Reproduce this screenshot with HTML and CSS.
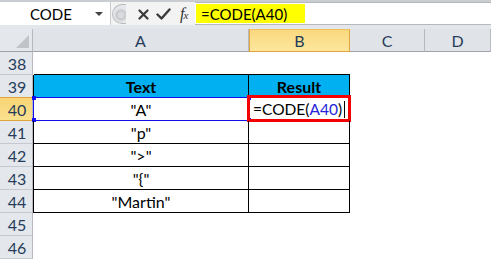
FILE: index.html
```html
<!DOCTYPE html>
<html>
<head>
<meta charset="utf-8">
<link rel="stylesheet" href="styles.css">
</head>
<body>
<div class="toolbar">
  <div class="namebox">
    <span class="name">CODE</span>
    <span class="dd"></span>
  </div>
  <div class="tools">
    <span class="knob"></span>
    <svg class="ico x" width="11" height="11" viewBox="0 0 11 11"><path d="M1.5 1.5 L9.5 9.5 M9.5 1.5 L1.5 9.5" stroke="#3a3a3a" stroke-width="2.2" stroke-linecap="round"/></svg>
    <svg class="ico chk" width="15" height="12" viewBox="0 0 15 12"><path d="M1.5 6.5 L5.5 10.5 L13.5 1.5" stroke="#3a3a3a" stroke-width="2.4" fill="none" stroke-linecap="round" stroke-linejoin="round"/></svg>
    <span class="fx">f<small>x</small></span>
  </div>
  <div class="formula"><span class="hl">=CODE(A40)</span></div>
</div>
<div class="sheet">
  <div class="row head">
    <div class="rh corner"><span class="tri"></span></div>
    <div class="ch">A</div>
    <div class="ch sel">B</div>
    <div class="ch">C</div>
    <div class="ch">D</div>
  </div>
  <div class="row">
    <div class="rh">38</div>
    <div class="c a top"></div><div class="c b top"></div><div class="c"></div><div class="c"></div>
  </div>
  <div class="row">
    <div class="rh">39</div>
    <div class="c a t th">Text</div><div class="c b t th">Result</div><div class="c"></div><div class="c"></div>
  </div>
  <div class="row">
    <div class="rh rsel">40</div>
    <div class="c a t ref">"A"<i class="hd tl"></i><i class="hd bl"></i><i class="hd tr"></i><i class="hd br"></i></div>
    <div class="c b t edit"><span class="etext">=CODE(<span class="blue">A40</span>)</span><span class="caret"></span></div>
    <div class="c"></div><div class="c"></div>
  </div>
  <div class="row">
    <div class="rh">41</div>
    <div class="c a t">"p"</div><div class="c b t"></div><div class="c"></div><div class="c"></div>
  </div>
  <div class="row">
    <div class="rh">42</div>
    <div class="c a t">"&gt;"</div><div class="c b t"></div><div class="c"></div><div class="c"></div>
  </div>
  <div class="row">
    <div class="rh">43</div>
    <div class="c a t">"{"</div><div class="c b t"></div><div class="c"></div><div class="c"></div>
  </div>
  <div class="row">
    <div class="rh">44</div>
    <div class="c a t">"Martin"</div><div class="c b t"></div><div class="c"></div><div class="c"></div>
  </div>
  <div class="row">
    <div class="rh">45</div>
    <div class="c"></div><div class="c"></div><div class="c"></div><div class="c"></div>
  </div>
  <div class="row">
    <div class="rh">46</div>
    <div class="c"></div><div class="c"></div><div class="c"></div><div class="c"></div>
  </div>
</div>
</body>
</html>
```
FILE: styles.css
```css
* { box-sizing: border-box; }
html, body { margin: 0; padding: 0; background: #fff; }
body {
  width: 491px; height: 259px; overflow: hidden;
  font-family: Lato, "Open Sans", sans-serif;
  color: #000;
}
.toolbar {
  height: 29px;
  display: flex;
  background: #e3e6ea;
  border-top: 2px solid #c9ccd1;
  padding-bottom: 4px;
}
.namebox {
  width: 110px;
  background: #fff;
  display: flex;
  align-items: center;
  padding-left: 30px;
  font-size: 15px;
}
.namebox .name { flex: 1; }
.dd {
  width: 0; height: 0;
  border-left: 4px solid transparent;
  border-right: 4px solid transparent;
  border-top: 4px solid #444;
  margin-right: 7px;
}
.tools {
  width: 85px;
  flex: none;
  background: #f3f3f4;
  display: flex;
  align-items: center;
  border-left: 1px solid #c9ccd1;
}
.knob {
  flex: none;
  width: 14px; height: 20px;
  border-radius: 10px 0 0 10px;
  background: radial-gradient(circle at 8px 10px, #d9dadd 0 3px, #c2c4c8 4px, #e6e7ea 7px);
  border: 1px solid #b9bbbf;
  border-right: none;
  margin-left: 1px;
  margin-right: 12px;
}
.ico { display: block; flex: none; }
.ico.x { margin-right: 7px; margin-top: 1px; }
.ico.chk { margin-right: 9px; }
.fx {
  font-family: "Liberation Serif", serif;
  font-style: italic;
  font-size: 16px;
  color: #333;
  letter-spacing: -1px;
}
.fx small { font-size: 11px; }
.formula {
  flex: 1;
  background: #fff;
  border-top: 1px solid #b5b9be;
  border-bottom: 1px solid #b5b9be;
  display: flex;
  align-items: stretch;
  padding: 1px 0 1px 1px;
}
.hl {
  background: #ffff00;
  font-size: 15px;
  line-height: 20px;
  padding: 0 18px 0 5px;
}
.sheet { background: #fff; }
.row {
  display: grid;
  grid-template-columns: 33px 216px 101px 75px 1fr;
  height: 23px;
}
.rh {
  background: #e4e7eb;
  border-right: 1px solid #b6bac0;
  border-bottom: 1px solid #c6cad0;
  color: #263c5b;
  font-size: 16px;
  display: flex; align-items: center; justify-content: center;
  padding-left: 2px;
}
.head { height: 23px; }
.head .rh { border-bottom: 1px solid #9fa4ab; }
.corner { position: relative; }
.tri {
  position: absolute; right: 3px; bottom: 3px;
  width: 0; height: 0;
  border-left: 13px solid transparent;
  border-bottom: 13px solid #c0c4c9;
}
.ch {
  background: #e0e3e8;
  border-right: 1px solid #b6bac0;
  border-bottom: 1px solid #9fa4ab;
  color: #263c5b;
  font-size: 16px;
  display: flex; align-items: center; justify-content: center;
}
.ch.sel {
  background: linear-gradient(#f9d97f, #fde69c);
  border: 1px solid #e2a53b;
  border-top-color: #f0c060;
}
.rh.rsel {
  background: linear-gradient(#f8d576, #fbe08e);
  border-top: 1px solid #e2a53b;
  border-bottom: 1px solid #e2a53b;
  margin-top: -1px;
  height: 24px;
}
.c {
  font-size: 16px;
  display: flex; align-items: center; justify-content: center;
  position: relative;
}
.c.top { border-bottom: 1px solid #000; }
.c.a.t { border-left: 1px solid #000; border-right: 1px solid #000; border-bottom: 1px solid #000; }
.c.b.t { border-right: 1px solid #000; border-bottom: 1px solid #000; }
.c.a.top { margin-left: 1px; }
.th {
  background: #00b0f0;
  font-weight: bold;
  padding-top: 1px;
}
.ref {
  border-top: 1px solid #1010ee !important;
  border-bottom: 1px solid #1010ee !important;
  margin-top: -1px;
  height: 24px;
  border-left-color: #1010ee !important;
}
.hd {
  position: absolute;
  width: 4px; height: 4px;
  background: #1212f0;
}
.hd.tl { left: -2px; top: -2px; }
.hd.bl { left: -2px; bottom: -2px; }
.hd.tr { right: -3px; top: -2px; }
.hd.br { right: -3px; bottom: -2px; }
.edit {
  justify-content: flex-start;
  padding-left: 4px;
  font-size: 15.5px;
}
.edit::after {
  content: "";
  position: absolute;
  left: -2px; top: -3px; right: -2px; bottom: -2px;
  border: 3px solid #f50000;
}
.blue { color: #2424d8; }
.caret {
  width: 1px; height: 17px; background: #000; margin-left: 2px;
}
```
